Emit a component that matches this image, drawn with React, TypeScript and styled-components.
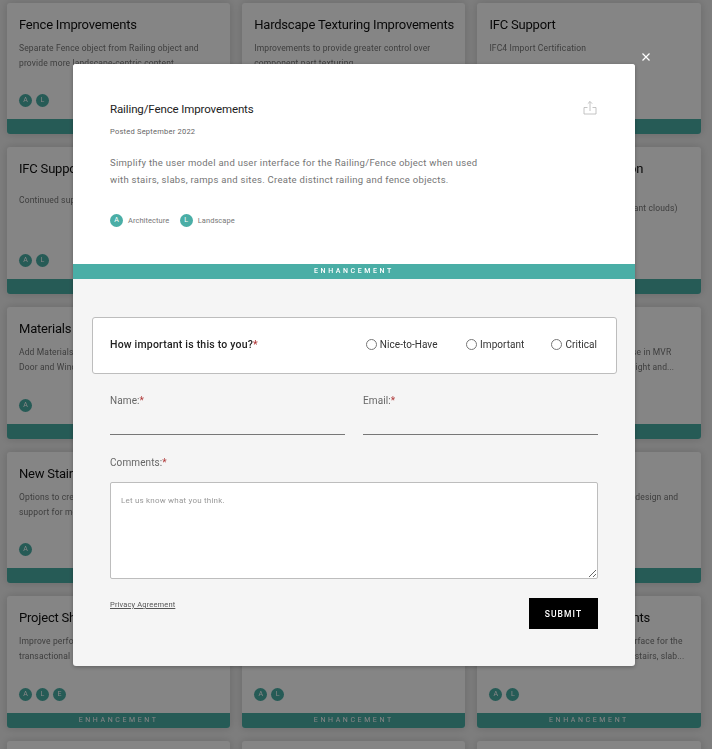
import React from "react";
import styled, { createGlobalStyle } from "styled-components";

const Global = createGlobalStyle`
  html, body { margin: 0; padding: 0; height: 100%; overflow: hidden; background: #f0f0f0; }
  * { box-sizing: border-box; }
  body { font-family: Roboto, "Liberation Sans", sans-serif; }
`;

const Page = styled.div`
  height: 749px;
  overflow: hidden;
`;
const CardGrid = styled.main`
  display: grid;
  grid-template-columns: repeat(3, 223.2px);
  grid-template-rows: 131px 147px 132px 131px 132px 120px;
  column-gap: 12px;
  row-gap: 13px;
  padding: 3px 0 0 7px;
  filter: blur(0.5px);
`;
const Card = styled.article`
  display: flex;
  flex-direction: column;
  background: #fff;
  border-radius: 3px;
  box-shadow: 0 0 10px rgba(0, 0, 0, 0.16);
  overflow: hidden;
`;
const CardBody = styled.div`
  flex: 1;
  display: flex;
  flex-direction: column;
  padding: 14px 12px 12px;
`;
const CardTitle = styled.h3`
  margin: 0;
  font-size: 13px;
  font-weight: 400;
  line-height: 15px;
  letter-spacing: -0.2px;
  color: #111;
  white-space: nowrap;
`;
const CardText = styled.p<{ $shift: number }>`
  margin: ${(p) => p.$shift}px 0 0;
  font-size: 8.5px;
  line-height: 15px;
  letter-spacing: 0.14px;
  color: #777;
  white-space: nowrap;
`;
const Line = styled.span`
  display: block;
`;
const Badges = styled.div`
  margin-top: auto;
  display: flex;
  gap: 4px;
`;
const Badge = styled.span`
  width: 13px;
  height: 13px;
  border-radius: 50%;
  background: #4aaea6;
  color: #fff;
  font-size: 7px;
  line-height: 13px;
  text-align: center;
  flex: none;
`;
const CardBar = styled.div`
  height: 15px;
  background: #4aaea6;
  color: #fff;
  font-size: 7px;
  line-height: 15px;
  letter-spacing: 2.6px;
  text-align: center;
`;

const Overlay = styled.div`
  position: fixed;
  inset: 0;
  background: rgba(0, 0, 0, 0.48);
`;
const CloseButton = styled.button`
  position: absolute;
  left: 640px;
  top: 51px;
  width: 12px;
  height: 12px;
  padding: 0;
  border: 0;
  background: none;
  color: #fff;
  display: block;
`;
const Modal = styled.section`
  position: absolute;
  left: 73px;
  top: 64px;
  width: 562px;
  height: 602px;
  display: flex;
  flex-direction: column;
  background: #f5f5f5;
  border-radius: 3px;
  overflow: hidden;
  box-shadow: 0 1px 4px rgba(0, 0, 0, 0.3);
`;
const ModalTop = styled.header`
  position: relative;
  height: 200px;
  background: #fff;
  padding: 38px 37px 0;
`;
const ModalTitle = styled.h2`
  margin: 0;
  font-size: 11.5px;
  font-weight: 400;
  line-height: 14px;
  letter-spacing: -0.12px;
  color: #222;
`;
const Posted = styled.p`
  margin: 11px 0 0;
  font-size: 7.5px;
  line-height: 10px;
  letter-spacing: 0.23px;
  color: #666;
`;
const Summary = styled.p`
  margin: 17px 0 0;
  font-size: 9.5px;
  line-height: 17px;
  letter-spacing: 0.28px;
  color: #757575;
  white-space: nowrap;
`;
const Tags = styled.div`
  margin-top: 26px;
  display: flex;
  align-items: center;
`;
const TagLabel = styled.span`
  margin: 0 10.5px 0 5px;
  font-size: 7.5px;
  letter-spacing: 0.05px;
  color: #777;
`;
const ShareButton = styled.button`
  position: absolute;
  right: 38px;
  top: 36px;
  width: 14px;
  height: 16px;
  padding: 0;
  border: 0;
  background: none;
  color: #b5b5b5;
`;
const TypeBar = styled.div`
  height: 15px;
  flex: none;
  background: #4aaea6;
  color: #fff;
  font-size: 7px;
  font-weight: 500;
  line-height: 15px;
  letter-spacing: 2.6px;
  text-align: center;
`;
const Form = styled.form`
  padding: 38px 18px 0 19px;
  display: flex;
  flex-direction: column;
`;
const Question = styled.div`
  padding: 0 19px 2px 17px;
  height: 57px;
  display: flex;
  align-items: center;
  justify-content: space-between;
  background: #fff;
  border: 1px solid #bdbdbd;
  border-radius: 3px;
`;
const QuestionLabel = styled.span`
  font-size: 10.5px;
  letter-spacing: 0.2px;
  color: #222;
  font-weight: 500;
`;
const Required = styled.span`
  color: #b03a3a;
`;
const RadioGroup = styled.div`
  display: flex;
  gap: 27px;
`;
const RadioLabel = styled.label`
  display: flex;
  align-items: center;
  gap: 3px;
  font-size: 10px;
  letter-spacing: 0.05px;
  color: #333;
  &:first-child {
    margin-right: 1.5px;
  }
`;
const Radio = styled.input`
  appearance: none;
  margin: 0;
  width: 11px;
  height: 11px;
  border: 1px solid #777;
  border-radius: 50%;
  background: #fff;
`;
const Fields = styled.div`
  padding: 0 19px 0 18px;
  display: flex;
  flex-direction: column;
`;
const Row = styled.div`
  margin-top: 20px;
  display: grid;
  grid-template-columns: 235px 235px;
  column-gap: 18px;
`;
const Field = styled.label`
  display: flex;
  flex-direction: column;
`;
const FieldLabel = styled.span`
  font-size: 10px;
  line-height: 13px;
  letter-spacing: 0.1px;
  color: #666;
`;
const TextInput = styled.input`
  height: 22px;
  margin-top: 6px;
  border: 0;
  border-bottom: 1px solid #777;
  background: none;
  outline: none;
`;
const CommentField = styled(Field)`
  margin-top: 21px;
`;
const Comments = styled.textarea`
  display: block;
  height: 97px;
  width: 488px;
  margin-top: 13px;
  padding: 13px 10px;
  font-family: inherit;
  font-size: 8px;
  letter-spacing: 0.2px;
  border: 1px solid #bdbdbd;
  border-radius: 2px;
  background: #fff;
  outline: none;
  &::placeholder { color: #999; }
`;
const Actions = styled.div`
  margin-top: 19px;
  display: flex;
  justify-content: space-between;
  align-items: flex-start;
`;
const Privacy = styled.a`
  margin-top: 2px;
  font-size: 7.5px;
  letter-spacing: 0.15px;
  color: #555;
  text-decoration: underline;
`;
const Submit = styled.button`
  width: 69px;
  height: 31px;
  padding: 0;
  border: 0;
  background: #000;
  color: #fff;
  font-family: inherit;
  font-size: 8.5px;
  font-weight: 500;
  letter-spacing: 1.1px;
`;

type CardData = { title: string; lines: string[]; badges: string[]; shift?: number };
const cards: CardData[] = [
  { title: "Fence Improvements", lines: ["Separate Fence object from Railing object and", "provide more landscape-centric content"], badges: ["A", "L"] },
  { title: "Hardscape Texturing Improvements", lines: ["Improvements to provide greater control over", "component part texturing"], badges: ["A", "L"] },
  { title: "IFC Support", lines: ["IFC4 Import Certification"], badges: ["A", "L"] },
  { title: "IFC Support", lines: ["Continued support for IFC"], badges: ["A", "L"], shift: 17 },
  { title: "Point Clouds", lines: ["Continued support"], badges: ["A", "L"], shift: 17 },
  { title: "Point Cloud Documentation", lines: ["Improved support and imports for (giant clouds)"], badges: ["A", "L"], shift: 25 },
  { title: "Materials Improvements", lines: ["Add Materials to Door and Window", "Door and Window objects"], badges: ["A"] },
  { title: "Materials", lines: ["Add Materials"], badges: ["A"] },
  { title: "Spotlight Lighting", lines: ["Better lighting and rendering for all use in MVR", "More control over scene options, daylight and..."], badges: ["A"] },
  { title: "New Stair Tool", lines: ["Options to create stairs", "support for more"], badges: ["A"] },
  { title: "Stairs", lines: ["Options"], badges: ["A"] },
  { title: "Site Design", lines: ["Options for improving landscape site design and"], badges: ["A"] },
  { title: "Project Sharing", lines: ["Improve performance of project sharing", "transactional processes"], badges: ["A", "L", "E"] },
  { title: "Project Tools", lines: ["Improve tools"], badges: ["A", "L"] },
  { title: "Railing/Fence Improvements", lines: ["Simplify the user model and user interface for the", "Railing/Fence object when used with stairs, slab..."], badges: ["A", "L"] },
  { title: "Data Tags", lines: [""], badges: ["A"] },
  { title: "Worksheets", lines: [""], badges: ["A"] },
  { title: "Viewports", lines: [""], badges: ["A"] },
];

export default function App() {
  return (
    <Page>
      <Global />
      <CardGrid>
        {cards.map((c, i) => (
          <Card key={i}>
            <CardBody>
              <CardTitle>{c.title}</CardTitle>
              <CardText $shift={c.shift ?? 9}>
                {c.lines.map((l) => (
                  <Line key={l}>{l}</Line>
                ))}
              </CardText>
              <Badges>
                {c.badges.map((b) => (
                  <Badge key={b}>{b}</Badge>
                ))}
              </Badges>
            </CardBody>
            <CardBar>ENHANCEMENT</CardBar>
          </Card>
        ))}
      </CardGrid>
      <Overlay>
        <CloseButton aria-label="Close">
          <svg width="12" height="12" viewBox="0 0 12 12" fill="none" stroke="currentColor" strokeWidth="1.2">
            <path d="M2.5 2.5l7 7M9.5 2.5l-7 7" />
          </svg>
        </CloseButton>
        <Modal>
          <ModalTop>
            <ModalTitle>Railing/Fence Improvements</ModalTitle>
            <Posted>Posted September 2022</Posted>
            <Summary>
              <Line>Simplify the user model and user interface for the Railing/Fence object when used</Line>
              <Line>with stairs, slabs, ramps and sites. Create distinct railing and fence objects.</Line>
            </Summary>
            <Tags>
              <Badge>A</Badge>
              <TagLabel>Architecture</TagLabel>
              <Badge>L</Badge>
              <TagLabel>Landscape</TagLabel>
            </Tags>
            <ShareButton aria-label="Share">
              <svg width="14" height="16" viewBox="0 0 14 16" fill="none" stroke="currentColor" strokeWidth="0.8">
                <path d="M4.5 7.5H1v6.5h12V7.5H9.5M7 11V1.5M4.8 3.7L7 1.5l2.2 2.2" />
              </svg>
            </ShareButton>
          </ModalTop>
          <TypeBar>ENHANCEMENT</TypeBar>
          <Form>
            <Question>
              <QuestionLabel>
                How important is this to you?<Required>*</Required>
              </QuestionLabel>
              <RadioGroup>
                <RadioLabel><Radio type="radio" name="imp" />Nice-to-Have</RadioLabel>
                <RadioLabel><Radio type="radio" name="imp" />Important</RadioLabel>
                <RadioLabel><Radio type="radio" name="imp" />Critical</RadioLabel>
              </RadioGroup>
            </Question>
            <Fields>
              <Row>
                <Field>
                  <FieldLabel>Name:<Required>*</Required></FieldLabel>
                  <TextInput type="text" />
                </Field>
                <Field>
                  <FieldLabel>Email:<Required>*</Required></FieldLabel>
                  <TextInput type="text" />
                </Field>
              </Row>
              <CommentField>
                <FieldLabel>Comments:<Required>*</Required></FieldLabel>
                <Comments placeholder="Let us know what you think." />
              </CommentField>
              <Actions>
                <Privacy href="#">Privacy Agreement</Privacy>
                <Submit type="button">SUBMIT</Submit>
              </Actions>
            </Fields>
          </Form>
        </Modal>
      </Overlay>
    </Page>
  );
}
